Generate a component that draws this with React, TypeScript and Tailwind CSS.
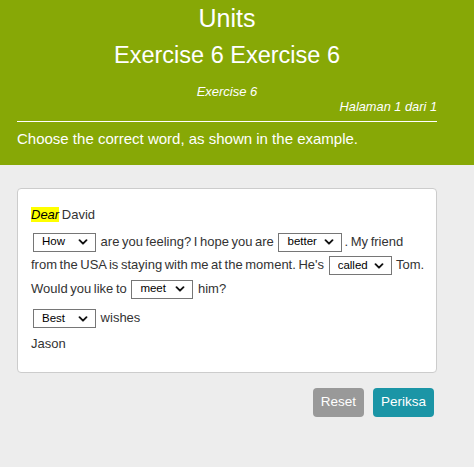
import React from 'react';

const Chevron = () => (
  <svg className="pointer-events-none absolute right-[8px] top-1/2 h-[10px] w-[10px] -translate-y-1/2" viewBox="0 0 10 10" fill="none">
    <path d="M1.5 3.2 5 6.7 8.5 3.2" stroke="#111" strokeWidth={1.9} strokeLinecap="round" strokeLinejoin="round" />
  </svg>
);

const Pick = ({ value, options, w = 'w-[63px]' }: { value: string; options: string[]; w?: string }) => (
  <span className={`relative mx-[2px] inline-block align-middle ${w}`}>
    <select
      defaultValue={value}
      className="block h-[19px] w-full appearance-none rounded-none border border-[#767676] bg-white pl-[8px] text-[11.5px] font-medium leading-none text-black [word-spacing:0]"
    >
      {options.map((o) => (
        <option key={o}>{o}</option>
      ))}
    </select>
    <Chevron />
  </span>
);

export default function App() {
  return (
    <div className="min-h-[467px] bg-[#ededed] font-['Liberation_Sans',Arial,sans-serif]">
      <header className="bg-[#87a806] pb-[17px] text-white">
        <div className="ml-[17px] w-[420px]">
          <h1 className="pt-[4px] text-center text-[25px] leading-[28px]">Units</h1>
          <h2 className="mt-[9px] text-center text-[23.5px] leading-[28px]">Exercise 6 Exercise 6</h2>
          <p className="mt-[15px] text-center text-[13px] italic leading-[16px]">Exercise 6</p>
          <p className="text-right text-[12.8px] italic leading-[14px]">Halaman 1 dari 1</p>
          <hr className="mt-[7px] border-t border-white" />
          <p className="mt-[8px] text-[15px] leading-[18px]">Choose the correct word, as shown in the example.</p>
        </div>
      </header>

      <main className="ml-[17px] w-[420px] pt-[23px]">
        <div className="rounded-[4px] border border-[#cccccc] bg-white pb-[17px] pl-[13px] pr-[6px] pt-[14px] text-[13px] leading-[23.5px] text-[#333] [word-spacing:-1px]">
          <p>
            <span className="bg-[#ffff00] italic text-black">Dear</span> David
          </p>
          <p className="mt-[3px]">
            <Pick value="How" options={['How', 'What', 'Why']} /> are you feeling? I hope you are{' '}
            <Pick value="better" options={['better', 'good', 'best']} w="w-[64px]" />. My friend from the USA is staying
            with me at the moment. He's <Pick value="called" options={['called', 'name', 'named']} /> Tom. Would you like to{' '}
            <Pick value="meet" options={['meet', 'see', 'know']} w="w-[62px]" /> him?
          </p>
          <p className="mt-[6px]">
            <Pick value="Best" options={['Best', 'Good', 'Many']} /> wishes
          </p>
          <p className="mt-[2px]">Jason</p>
        </div>

        <div className="mt-[15px] flex justify-end gap-[9px] pr-[3px]">
          <button className="h-[29px] rounded-[4px] bg-[#999999] px-[8px] text-[13.5px] text-white">Reset</button>
          <button className="h-[29px] rounded-[4px] bg-[#1b95a6] px-[8px] text-[13.5px] text-white">Periksa</button>
        </div>
      </main>
    </div>
  );
}
